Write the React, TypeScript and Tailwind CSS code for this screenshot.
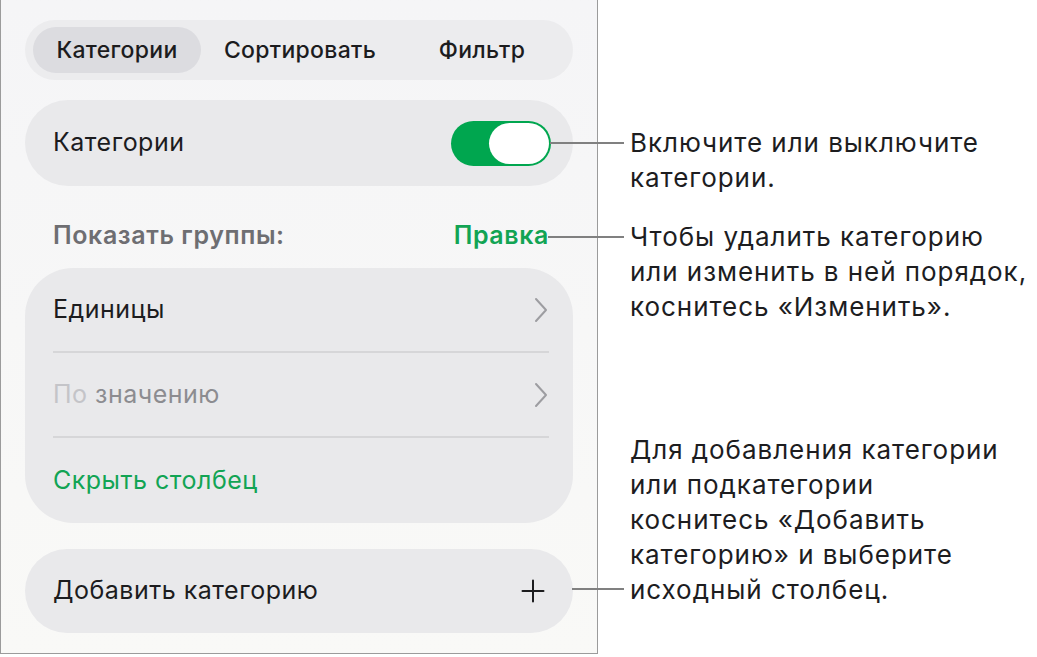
import type { ReactNode } from "react";

const font = { fontFamily: "Inter, 'Noto Sans', sans-serif" };

function Leader({ className }: { className: string }) {
  return <span className={`absolute right-[calc(100%+6px)] h-[2px] bg-[#808080] ${className}`} />;
}

function Chevron() {
  return (
    <svg width="16" height="26" viewBox="0 0 16 26" fill="none" className="shrink-0">
      <polyline points="3,2 13,13 3,24" stroke="#9d9da1" strokeWidth="2" strokeLinecap="round" strokeLinejoin="round" />
    </svg>
  );
}

function PlusIcon() {
  return (
    <svg width="24" height="24" viewBox="0 0 24 24" fill="none" className="shrink-0">
      <path d="M12 1.5v21M1.5 12h21" stroke="#1c1c1e" strokeWidth="2" strokeLinecap="round" />
    </svg>
  );
}

function Toggle() {
  return (
    <div className="flex h-[45px] w-[100px] items-center justify-end rounded-full bg-[#00a64f] p-[2px]">
      <div className="h-[41px] w-[60px] rounded-full bg-white" />
    </div>
  );
}

function Row({ children, last }: { children: ReactNode; last?: boolean }) {
  return (
    <div className={`ml-7 mr-6 flex h-[85px] items-center ${last ? "" : "border-b-2 border-[#d6d6d8]"}`}>
      {children}
    </div>
  );
}

export default function App() {
  return (
    <div className="flex h-[657px] w-[1037px] bg-white text-[#1c1c1e]" style={font}>
      {/* settings panel */}
      <div className="flex h-[654px] w-[598px] shrink-0 flex-col border border-t-0 border-[#9b9b9b] bg-gradient-to-b from-[#f5f5f7] to-[#f9f9f7] px-6 pt-5">
        <div className="flex h-[60px] items-center rounded-full bg-[#ececee] px-2">
          <div className="flex h-[46px] w-[168px] items-center justify-center rounded-full bg-[#dcdce0] text-[23px] font-medium tracking-[0.3px]">
            Категории
          </div>
          <div className="flex flex-1 items-center justify-center text-[23px] font-medium tracking-[0.3px]">Сортировать</div>
          <div className="flex w-[166px] items-center justify-center text-[23px] font-medium tracking-[0.3px]">Фильтр</div>
        </div>

        <div className="mt-5 flex h-[86px] items-center justify-between rounded-full bg-[#e9e9eb] pl-7 pr-[22px]">
          <span className="text-[25px] tracking-[0.5px]">Категории</span>
          <Toggle />
        </div>

        <div className="mt-[36px] mb-[18px] flex h-[28px] items-center justify-between pl-7 pr-6 text-[25px] font-semibold tracking-[0.6px]">
          <span className="text-[#6e6e72]">Показать группы:</span>
          <span className="text-[#12a454]">Правка</span>
        </div>

        <div className="flex flex-col rounded-[48px] bg-[#e9e9eb] text-[25px] tracking-[0.5px]">
          <Row>
            <span className="flex-1">Единицы</span>
            <Chevron />
          </Row>
          <Row>
            <span className="flex-1">
              <span className="text-[#c4c4c8]">По</span> <span className="text-[#8c8c90]">значению</span>
            </span>
            <Chevron />
          </Row>
          <Row last>
            <span className="text-[#12a454]">Скрыть столбец</span>
          </Row>
        </div>

        <div className="mt-[26px] flex h-[84px] items-center justify-between rounded-full bg-[#e9e9eb] pl-7 pr-[28px]">
          <span className="text-[25px] tracking-[0.5px]">Добавить категорию</span>
          <PlusIcon />
        </div>
      </div>

      {/* callouts */}
      <div className="flex flex-col pl-8 text-[26px] leading-[35px] tracking-[0.95px] text-[#1d1d1f]">
        <div className="relative mt-[125px]">
          <Leader className="top-[17px] w-[74px]" />
          Включите или выключите
          <br />
          категории.
        </div>
        <div className="relative mt-[24px]">
          <Leader className="top-[17px] w-[76px]" />
          Чтобы удалить категорию
          <br />
          или изменить в ней порядок,
          <br />
          коснитесь «Изменить».
        </div>
        <div className="relative mt-[108px]">
          <Leader className="bottom-[17px] w-[52px]" />
          Для добавления категории
          <br />
          или подкатегории
          <br />
          коснитесь «Добавить
          <br />
          категорию» и выберите
          <br />
          исходный столбец.
        </div>
      </div>
    </div>
  );
}
